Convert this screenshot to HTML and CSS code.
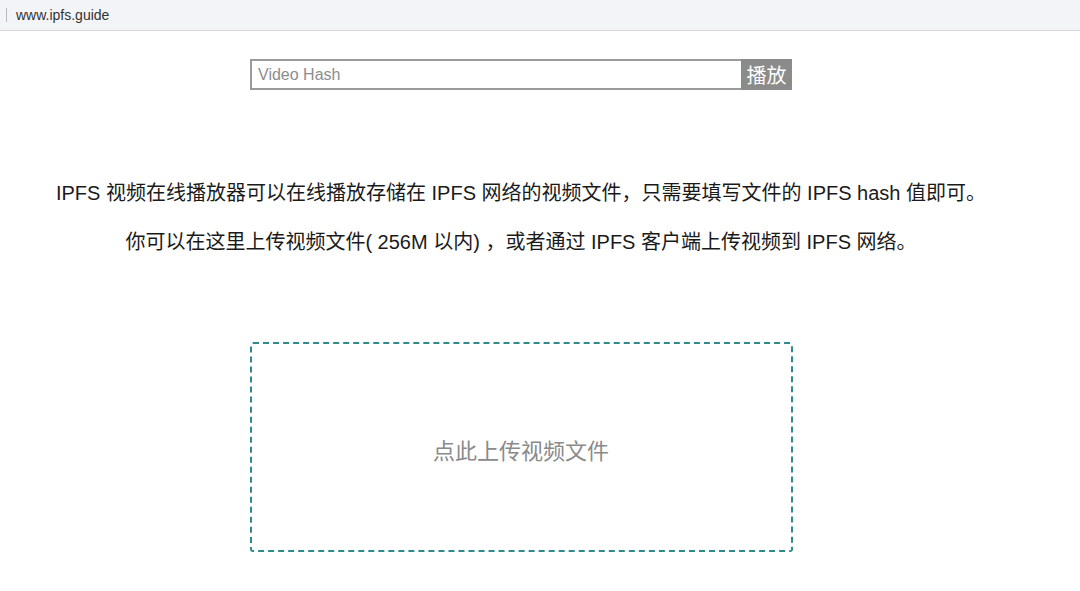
FILE: index.html
```html
<!DOCTYPE html>
<html lang="zh-CN">
<head>
<meta charset="utf-8">
<title>IPFS 视频在线播放器</title>
<link rel="stylesheet" href="styles.css">
</head>
<body>
<header class="addressbar">
  <span class="caret"></span>
  <span class="url">www.ipfs.guide</span>
</header>
<main class="page">
  <form class="search">
    <input class="hash-input" type="text" placeholder="Video Hash">
    <button class="play-btn" type="button">播放</button>
  </form>
  <section class="intro">
    <p>IPFS 视频在线播放器可以在线播放存储在 IPFS 网络的视频文件，只需要填写文件的 IPFS hash 值即可。</p>
    <p>你可以在这里上传视频文件( 256M 以内) ，或者通过 IPFS 客户端上传视频到 IPFS 网络。</p>
  </section>
  <div class="upload">点此上传视频文件</div>
</main>
</body>
</html>
```

FILE: styles.css
```css
html, body {
  margin: 0;
  padding: 0;
  background: #ffffff;
  font-family: "Liberation Sans", "Noto Sans CJK SC", sans-serif;
  color: #1a1a1a;
}

.addressbar {
  height: 31px;
  box-sizing: border-box;
  background: #f3f4f7;
  border-bottom: 1px solid #d6d6d6;
  display: flex;
  align-items: center;
  padding-left: 6px;
  gap: 9px;
}

.caret {
  width: 1px;
  height: 14px;
  background: #b8b8b8;
}

.url {
  font-size: 14px;
  color: #333;
}

.page {
  display: flex;
  flex-direction: column;
  align-items: center;
  padding-right: 38px;
}

.search {
  margin: 28px 0 0;
  display: flex;
  width: 542px;
  height: 31px;
}

.hash-input {
  flex: 1;
  box-sizing: border-box;
  height: 31px;
  border: 2px solid #9a9a9a;
  border-right: none;
  padding: 0 6px;
  font-family: "Liberation Sans", sans-serif;
  font-size: 16px;
  color: #333;
  outline: none;
}

.hash-input::placeholder {
  color: #8c8c8c;
}

.play-btn {
  width: 51px;
  height: 31px;
  border: none;
  background: #8b8b8b;
  color: #ffffff;
  font-family: "Noto Sans CJK SC", sans-serif;
  font-size: 20px;
  padding: 0;
  line-height: 31px;
}

.intro {
  margin-top: 90px;
  text-align: center;
}

.intro p {
  margin: 0 0 22px;
  font-size: 20px;
  line-height: 27px;
  color: #1a1a1a;
}

.upload {
  margin-top: 64px;
  width: 543px;
  height: 210px;
  box-sizing: border-box;
  border: 2px dashed #2e8a8c;
  border-radius: 3px;
  display: flex;
  align-items: center;
  justify-content: center;
  font-family: "Noto Sans CJK SC", sans-serif;
  font-size: 22px;
  color: #8a8a8a;
  padding-top: 4px;
}
```
